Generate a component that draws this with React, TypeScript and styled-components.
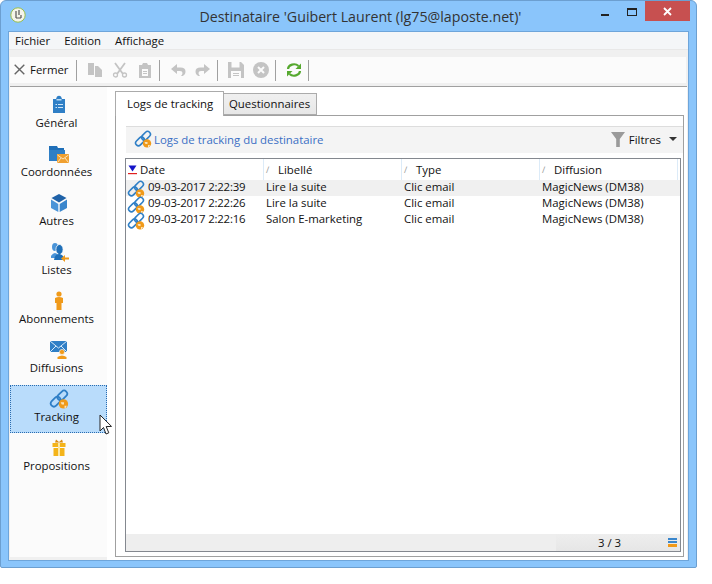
import styled, { createGlobalStyle } from "styled-components";

const GlobalStyle = createGlobalStyle`
  html, body {
    margin: 0;
    background: #fff;
  }
  * {
    box-sizing: border-box;
  }
`;

const BLUE = "#2f7fc6";
const ORANGE = "#f09a1a";
const GREY = "#c4c4c4";

const LinkGlobeIcon = ({ size = 18 }: { size?: number }) => (
  <svg width={size} height={size} viewBox="0 0 18 18" fill="none">
    <rect x="7" y="3" width="10" height="5.6" rx="2.8" transform="rotate(-45 12 5.8)" stroke={BLUE} strokeWidth="1.6" />
    <rect x="1" y="8.6" width="10" height="5.6" rx="2.8" transform="rotate(-45 6 11.4)" stroke={BLUE} strokeWidth="1.6" />
    <circle cx="13" cy="13.4" r="4.2" fill={ORANGE} />
    <path d="M10.5 12 h3 v2 h-2 z M14 15 h2 l-1 2 h-1 z" fill="#fbe3b8" />
  </svg>
);

const ClipboardIcon = () => (
  <svg width="20" height="20" viewBox="0 0 20 20">
    <path d="M4 4 h3 l1 -2.5 q2 -1.5 4 0 l1 2.5 h3 v14 h-12 z" fill={BLUE} />
    <path d="M7.5 4 h5 v1.5 h-5 z" fill="#bcdcf5" />
    <path d="M6.5 9 h1.5 v1 h-1.5 z M9 9 h5 v1 h-5 z M6.5 12 h1.5 v1 h-1.5 z M9 12 h5 v1 h-5 z" fill="#cfe5f7" />
  </svg>
);

const FolderMailIcon = () => (
  <svg width="20" height="20" viewBox="0 0 20 20">
    <path d="M0 2 h8 l1 2 h6 v3 h-15 z" fill="#1f6fb8" />
    <path d="M0 6 h16 v11 h-16 z" fill={BLUE} />
    <rect x="8" y="10" width="12" height="9" fill="#f0a030" />
    <path d="M8.5 11 L14 15 L19.5 11 M8.5 18.5 L12 14 M19.5 18.5 L16 14" stroke="#fde4bb" fill="none" />
  </svg>
);

const CubeIcon = () => (
  <svg width="20" height="20" viewBox="0 0 20 20">
    <path d="M10 1 L17.5 5 L10 9.5 L2.5 5 z" fill="#1f62a8" />
    <path d="M2 6.5 L9.3 11 V19 L2 15 z" fill="#4a94d8" />
    <path d="M18 6.5 L10.7 11 V19 L18 15 z" fill="#3a86cc" />
  </svg>
);

const PeopleIcon = () => (
  <svg width="20" height="20" viewBox="0 0 20 20">
    <ellipse cx="6" cy="5" rx="3" ry="4" fill="#4a94d8" />
    <path d="M2 14 q4 -6 8 0 v2 h-8 z" fill="#4a94d8" />
    <ellipse cx="10.5" cy="7.5" rx="3.6" ry="5" fill="#1f6fb8" stroke="#fbfbfb" strokeWidth="0.8" />
    <path d="M5 18 q1 -6.5 5.5 -6 q4 .5 5 6 z" fill="#1f6fb8" />
    <path d="M20 15.5 h-4 v-2.5 l-4 3.5 l4 3.5 v-2.5 h4 z" fill={ORANGE} />
  </svg>
);

const PersonIcon = () => (
  <svg width="20" height="20" viewBox="0 0 20 20">
    <circle cx="10" cy="3" r="2.6" fill={ORANGE} />
    <path d="M6 7 q4 -2 8 0 v5 h-1.5 v7 h-5 v-7 h-1.5 z" fill={ORANGE} />
  </svg>
);

const MailPersonIcon = () => (
  <svg width="20" height="20" viewBox="0 0 20 20" style={{ overflow: "visible" }}>
    <path d="M1 1 h17 v11 h-17 z" fill={BLUE} />
    <path d="M1 1 L9.5 8 L18 1 M1 12 L7 6 M18 12 L12 6" stroke="#d6e9f9" fill="none" />
    <circle cx="13" cy="12" r="2.6" fill={ORANGE} stroke="#fbfbfb" strokeWidth="0.6" />
    <path d="M8.5 19 v-2 q4.5 -3 9 0 v2 z" fill={ORANGE} />
  </svg>
);

const GiftIcon = () => (
  <svg width="20" height="20" viewBox="0 0 20 20">
    <path d="M7 1.5 L10 4 L13 1.5 L14 4.5 H6 z" fill="#d98a10" />
    <rect x="3.5" y="5" width="13" height="4" fill="#f4b41a" />
    <rect x="4.5" y="10" width="11" height="8" fill="#f4b41a" />
    <rect x="9" y="5" width="2" height="13" fill="#fbe7a6" />
  </svg>
);

const CursorIcon = () => (
  <svg width="14" height="22" viewBox="0 0 14 22">
    <path
      d="M1 1 L1 17 L4.5 13.5 L7 20 L9.8 18.8 L7.2 12.6 L12.5 12.4 z"
      fill="#fff"
      stroke="#222"
      strokeWidth="1"
    />
  </svg>
);

const CopyIcon = () => (
  <svg width="16" height="16" viewBox="0 0 16 16" fill={GREY}>
    <path d="M1 1 h6 v12 h-6 z M8 4 h3 l4 4 v7 h-7 z" />
  </svg>
);

const CutIcon = () => (
  <svg width="16" height="16" viewBox="0 0 16 16" fill="none" stroke={GREY}>
    <path d="M3 1 L11 12 M13 1 L5 12" strokeWidth="1.8" />
    <circle cx="3.5" cy="13" r="2" strokeWidth="1.3" />
    <circle cx="12.5" cy="13" r="2" strokeWidth="1.3" />
  </svg>
);

const PasteIcon = () => (
  <svg width="16" height="16" viewBox="0 0 16 16" fill={GREY}>
    <path d="M2 3 h3 l1 -2 h4 l1 2 h3 v13 h-12 z" />
    <path d="M5 7 h6 v7 h-6 z" fill="#fbfbfb" />
    <path d="M6 9 h4 v1 h-4 z M6 11 h4 v1 h-4 z" />
  </svg>
);

const UndoIcon = ({ flip }: { flip?: boolean }) => (
  <svg width="16" height="16" viewBox="0 0 16 16" style={flip ? { transform: "scaleX(-1)" } : undefined}>
    <path d="M7 2 L1 7 L7 12 V9 H10 q2.5 0 2.5 2 q0 1.5 -1.5 3 h1.5 q3 -1.5 3 -4.5 q0 -4 -5 -4 H7 z" fill={GREY} />
  </svg>
);

const SaveIcon = () => (
  <svg width="16" height="16" viewBox="0 0 16 16" fill={GREY}>
    <path d="M0 0 h13 l3 3 v13 h-16 z" />
    <path d="M3.5 0 h8 v5.5 h-8 z M3 9 h10 v7 h-10 z" fill="#fbfbfb" />
    <path d="M5 11 h6 v1 h-6 z M5 13 h6 v1 h-6 z" />
  </svg>
);

const CancelIcon = () => (
  <svg width="16" height="16" viewBox="0 0 16 16">
    <circle cx="8" cy="8" r="8" fill={GREY} />
    <path d="M5 5 L11 11 M11 5 L5 11" stroke="#fbfbfb" strokeWidth="2" />
  </svg>
);

const RefreshIcon = () => (
  <svg width="16" height="16" viewBox="0 0 16 16" fill="none">
    <path d="M2 7 a6 5 0 0 1 10.5 -3" stroke="#56a92f" strokeWidth="2.2" />
    <path d="M15 1.5 V7 H9.5 z" fill="#56a92f" />
    <path d="M14 9 a6 5 0 0 1 -10.5 3" stroke="#56a92f" strokeWidth="2.2" />
    <path d="M1 14.5 V9 H6.5 z" fill="#56a92f" />
  </svg>
);

const SortDownIcon = () => (
  <svg width="9" height="10" viewBox="0 0 9 10">
    <path d="M0.5 0.5 H8.5 L4.5 6.5 z" fill="#1414c8" />
    <rect x="0" y="8" width="9" height="1.2" fill="#e02020" />
  </svg>
);

const navItems = [
  { label: "Général", icon: <ClipboardIcon /> },
  { label: "Coordonnées", icon: <FolderMailIcon /> },
  { label: "Autres", icon: <CubeIcon /> },
  { label: "Listes", icon: <PeopleIcon /> },
  { label: "Abonnements", icon: <PersonIcon /> },
  { label: "Diffusions", icon: <MailPersonIcon /> },
  { label: "Tracking", icon: <LinkGlobeIcon size={20} />, active: true },
  { label: "Propositions", icon: <GiftIcon /> },
];

const rows = [
  { date: "09-03-2017 2:22:39", label: "Lire la suite", type: "Clic email", diffusion: "MagicNews (DM38)" },
  { date: "09-03-2017 2:22:26", label: "Lire la suite", type: "Clic email", diffusion: "MagicNews (DM38)" },
  { date: "09-03-2017 2:22:16", label: "Salon E-marketing", type: "Clic email", diffusion: "MagicNews (DM38)" },
];

const App = () => {
  return (
    <Window>
      <GlobalStyle />
      <TitleBar>
        <AppIcon>
          <svg width="16" height="16" viewBox="0 0 16 16">
            <circle cx="8" cy="8" r="7.2" fill="#f4f4ea" stroke="#9bbf4a" strokeWidth="1" />
            <path d="M6 4 v7 M9 3 v5 M6 11 h5 M11 8 v3" stroke="#555" strokeWidth="1.2" fill="none" />
          </svg>
        </AppIcon>
        <Title>Destinataire 'Guibert Laurent (lg75@laposte.net)'</Title>
        <WindowControls>
          <MinButton />
          <MaxButton />
          <CloseButton>
            <svg width="9" height="9" viewBox="0 0 9 9">
              <path d="M1 1 L8 8 M8 1 L1 8" stroke="#fff" strokeWidth="1.8" />
            </svg>
          </CloseButton>
        </WindowControls>
      </TitleBar>
      <Client>
        <MenuBar>
          <MenuItem>Fichier</MenuItem>
          <MenuItem>Edition</MenuItem>
          <MenuItem>Affichage</MenuItem>
        </MenuBar>
        <ToolbarArea>
          <Toolbar>
            <CloseAction>
              <svg width="11" height="11" viewBox="0 0 11 11">
                <path d="M0.7 0.7 L10.3 10.3 M10.3 0.7 L0.7 10.3" stroke="#666" strokeWidth="1.4" />
              </svg>
              Fermer
            </CloseAction>
            <ToolSep />
            <ToolGroup>
              <CopyIcon />
              <CutIcon />
              <PasteIcon />
            </ToolGroup>
            <ToolSep />
            <ToolGroup>
              <UndoIcon />
              <UndoIcon flip />
            </ToolGroup>
            <ToolSep />
            <ToolGroup>
              <SaveIcon />
              <CancelIcon />
            </ToolGroup>
            <ToolSep />
            <ToolGroup>
              <RefreshIcon />
            </ToolGroup>
            <ToolSep />
          </Toolbar>
        </ToolbarArea>
        <Body>
          <Sidebar>
            {navItems.map((item) => (
              <NavItem key={item.label} $active={item.active}>
                <NavIcon>{item.icon}</NavIcon>
                <NavLabel>{item.label}</NavLabel>
                {item.active && (
                  <Cursor>
                    <CursorIcon />
                  </Cursor>
                )}
              </NavItem>
            ))}
          </Sidebar>
          <Content>
            <Tabs>
              <Tab $active>Logs de tracking</Tab>
              <Tab>Questionnaires</Tab>
            </Tabs>
            <TabPanel>
              <SectionHeader>
                <SectionTitle>
                  <LinkGlobeIcon />
                  Logs de tracking du destinataire
                </SectionTitle>
                <FilterButton>
                  <svg width="14" height="15" viewBox="0 0 14 15">
                    <path d="M0 0 H14 L8.8 7 V15 H5.2 V7 z" fill="#9a9a9a" />
                  </svg>
                  Filtres
                  <Caret />
                </FilterButton>
              </SectionHeader>
              <ListBox>
                <HeaderRow>
                  <HeaderCell>
                    <SortDownIcon />
                    Date
                  </HeaderCell>
                  <HeaderCell>
                    <SortHint>∕</SortHint>
                    Libellé
                  </HeaderCell>
                  <HeaderCell>
                    <SortHint>∕</SortHint>
                    Type
                  </HeaderCell>
                  <HeaderCell>
                    <SortHint>∕</SortHint>
                    Diffusion
                  </HeaderCell>
                </HeaderRow>
                <RowList>
                  {rows.map((row, index) => (
                    <Row key={row.date} $selected={index === 0}>
                      <DateCell>
                        <LinkGlobeIcon />
                        {row.date}
                      </DateCell>
                      <Cell>{row.label}</Cell>
                      <Cell>{row.type}</Cell>
                      <Cell>{row.diffusion}</Cell>
                    </Row>
                  ))}
                </RowList>
                <ListFooter>
                  <Counter>
                    3 / 3
                    <ListMenuIcon>
                      <span />
                      <span />
                      <span />
                    </ListMenuIcon>
                  </Counter>
                </ListFooter>
              </ListBox>
            </TabPanel>
          </Content>
        </Body>
      </Client>
    </Window>
  );
};

export default App;

const Window = styled.div`
  width: 697px;
  height: 568px;
  display: flex;
  flex-direction: column;
  padding: 0 7px 6px;
  background-color: #8ac5fb;
  border: 1px solid #6c9fd0;
  border-radius: 6px 6px 2px 2px;
  font-family: "Open Sans", "Noto Sans", sans-serif;
  font-size: 11.4px;
  color: #111;
`;

const TitleBar = styled.div`
  position: relative;
  height: 30px;
  flex-shrink: 0;
  display: flex;
  align-items: center;
`;

const AppIcon = styled.div`
  display: flex;
  margin: -2px 0 0 2px;
`;

const Title = styled.div`
  flex: 1;
  margin-left: 6px;
  text-align: center;
  font-size: 14.2px;
  color: #333;
`;

const WindowControls = styled.div`
  position: absolute;
  top: 0;
  right: -1px;
  height: 20px;
  display: flex;
  align-items: flex-start;
`;

const MinButton = styled.div`
  width: 8px;
  height: 2px;
  margin: 13px 18px 0 0;
  background-color: #222;
`;

const MaxButton = styled.div`
  width: 10px;
  height: 8px;
  margin: 7px 8px 0 0;
  border: 1px solid #222;
  border-top-width: 2px;
`;

const CloseButton = styled.div`
  width: 45px;
  height: 20px;
  display: flex;
  align-items: center;
  justify-content: center;
  background-color: #c75050;
`;

const Client = styled.div`
  flex: 1;
  min-height: 0;
  display: flex;
  flex-direction: column;
  background-color: #f0f0f0;
  border: 1px solid #6ea5da;
`;

const MenuBar = styled.div`
  height: 18px;
  flex-shrink: 0;
  display: flex;
  align-items: center;
  gap: 14px;
  padding-left: 6px;
  background-color: #f4f6f8;
  border-bottom: 1px solid #e8e8e8;
`;

const MenuItem = styled.span`
  line-height: 17px;
`;

const ToolbarArea = styled.div`
  padding: 7px 2px 3px 1px;
  flex-shrink: 0;
`;

const Toolbar = styled.div`
  height: 26px;
  display: flex;
  align-items: center;
  padding-left: 4px;
  background-color: #fbfbfb;
`;

const CloseAction = styled.div`
  width: 62px;
  display: flex;
  align-items: center;
  gap: 5px;
  padding-bottom: 2px;
`;

const ToolSep = styled.div`
  width: 1px;
  height: 21px;
  background-color: #a0a0a0;
`;

const ToolGroup = styled.div`
  display: flex;
  align-items: center;
  gap: 9px;
  padding: 0 6px 0 10px;
`;

const Body = styled.div`
  flex: 1;
  min-height: 0;
  display: flex;
  margin-left: 1px;
  margin-right: 1px;
  border-top: 1px solid #a0a0a0;
`;

const Sidebar = styled.nav`
  width: 97px;
  flex-shrink: 0;
  display: flex;
  flex-direction: column;
  gap: 1px;
  padding-top: 4px;
  margin-bottom: 3px;
  background-color: #fbfbfb;
`;

const NavItem = styled.div<{ $active?: boolean }>`
  position: relative;
  height: 48px;
  display: flex;
  flex-direction: column;
  align-items: center;
  padding-top: 3px;
  border: 1px dotted ${({ $active }) => ($active ? "#2a6cb0" : "transparent")};
  background-color: ${({ $active }) => ($active ? "#b9dcfb" : "transparent")};
  line-height: 17px;
`;

const NavIcon = styled.div`
  height: 19px;
  display: flex;
`;

const NavLabel = styled.span`
  margin-right: 4px;
`;

const Cursor = styled.div`
  position: absolute;
  left: 88px;
  top: 28px;
  display: flex;
`;

const Content = styled.div`
  flex: 1;
  min-width: 0;
  display: flex;
  flex-direction: column;
  padding: 4px 3px 3px 8px;
  background-color: #fff;
`;

const Tabs = styled.div`
  display: flex;
  align-items: flex-end;
  height: 24px;
  flex-shrink: 0;
`;

const Tab = styled.div<{ $active?: boolean }>`
  height: ${({ $active }) => ($active ? "25px" : "22px")};
  width: ${({ $active }) => ($active ? "109px" : "93px")};
  margin-bottom: ${({ $active }) => ($active ? "-1px" : "0")};
  position: relative;
  padding-left: ${({ $active }) => ($active ? "11px" : "5px")};
  line-height: ${({ $active }) => ($active ? "24px" : "20px")};
  background: ${({ $active }) => ($active ? "#fff" : "linear-gradient(#f0f0f0, #e7e7e7)")};
  border: 1px solid #ababab;
  border-left-width: ${({ $active }) => ($active ? "1px" : "0")};
  border-bottom-width: ${({ $active }) => ($active ? "0" : "1px")};
`;

const TabPanel = styled.div`
  flex: 1;
  min-height: 0;
  display: flex;
  flex-direction: column;
  padding: 10px 0 4px 10px;
  border: 1px solid #a0a0a0;
`;

const SectionHeader = styled.div`
  height: 27px;
  flex-shrink: 0;
  display: flex;
  align-items: center;
  justify-content: space-between;
  padding: 0 6px 2px 8px;
  margin-bottom: 5px;
  background-color: #f4f4f4;
  border-top: 1px solid #dddddd;
`;

const SectionTitle = styled.div`
  display: flex;
  align-items: center;
  gap: 2px;
  color: #3a6fc4;
`;

const FilterButton = styled.div`
  display: flex;
  align-items: center;
  gap: 4px;
`;

const Caret = styled.div`
  width: 0;
  height: 0;
  margin-left: 4px;
  border: 4px solid transparent;
  border-top: 4px solid #333;
  border-bottom: none;
`;

const ListBox = styled.div`
  flex: 1;
  min-height: 0;
  display: flex;
  flex-direction: column;
  margin: 0 2px 0 -1px;
  border: 1px solid #84888f;
`;

const HeaderRow = styled.div`
  height: 21px;
  flex-shrink: 0;
  display: grid;
  grid-template-columns: repeat(4, 138px);
`;

const HeaderCell = styled.div`
  display: flex;
  align-items: center;
  gap: 3px;
  padding-left: 2px;
  border-right: 1px solid #dcebf8;
`;

const SortHint = styled.span`
  width: 9px;
  color: #999;
  font-size: 9px;
`;

const RowList = styled.div`
  flex: 1;
  min-height: 0;
`;

const Row = styled.div<{ $selected?: boolean }>`
  height: 16px;
  display: grid;
  grid-template-columns: repeat(4, 138px);
  align-items: start;
  background-color: ${({ $selected }) => ($selected ? "#f0f0f0" : "#fff")};
`;

const Cell = styled.div`
  padding-left: 2px;
  height: 14px;
  line-height: 14px;
  white-space: nowrap;
`;

const DateCell = styled(Cell)`
  display: flex;
  align-items: center;
  gap: 3px;
  padding-left: 1px;
  letter-spacing: -0.2px;
  svg {
    margin-top: 4px;
    flex-shrink: 0;
  }
`;

const ListFooter = styled.div`
  height: 17px;
  flex-shrink: 0;
  display: flex;
  justify-content: flex-end;
  background-color: #eeeeee;
`;

const Counter = styled.div`
  width: 124px;
  display: flex;
  align-items: center;
  justify-content: space-between;
  padding: 0 3px 0 42px;
  background: linear-gradient(#eeeeee, #e6e6e6);
`;

const ListMenuIcon = styled.div`
  width: 9px;
  display: flex;
  flex-direction: column;
  gap: 1px;
  span {
    height: 2px;
    background-color: #3a86cc;
  }
  span:last-child {
    height: 3px;
    background-color: ${ORANGE};
  }
`;
